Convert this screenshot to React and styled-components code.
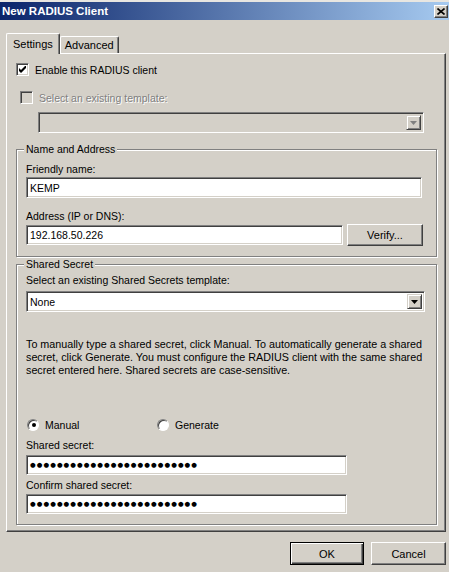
import React from "react";
import styled, { createGlobalStyle } from "styled-components";

const GlobalStyle = createGlobalStyle`
  html, body {
    margin: 0;
    padding: 0;
    background: #d4d0c8;
  }
  body {
    font-family: "Liberation Sans", Arial, sans-serif;
    font-size: 10.5px;
    color: #000;
  }
`;

const Window = styled.div`
  width: 449px;
  height: 572px;
  background: #d4d0c8;
  display: flex;
  flex-direction: column;
  overflow: hidden;
`;

const TitleBar = styled.div`
  height: 18px;
  border-top: 2px solid #e8e6e1;
  background: linear-gradient(to right, #0a246a, #a6caf0);
  display: flex;
  align-items: center;
  justify-content: space-between;
  padding: 0 1px 0 2px;
`;

const TitleText = styled.span`
  color: #fff;
  font-weight: bold;
  font-size: 11.5px;
`;

const CloseButton = styled.div`
  width: 12px;
  height: 11px;
  background: #d4d0c8;
  border: 1px solid;
  border-color: #fff #404040 #404040 #fff;
  box-shadow: inset -1px -1px 0 #808080;
  display: flex;
  align-items: center;
  justify-content: center;
  margin-top: 1px;
`;

const Body = styled.div`
  padding: 13px 3px 0 6px;
  display: flex;
  flex-direction: column;
`;

const TabStrip = styled.div`
  display: flex;
  align-items: flex-end;
  height: 20px;
  position: relative;
  z-index: 1;
`;

const Tab = styled.div`
  height: ${(p) => (p.active ? "20px" : "16px")};
  padding: 0 ${(p) => (p.active ? "6px" : "4px")};
  margin-bottom: ${(p) => (p.active ? "-1px" : "0")};
  background: #d4d0c8;
  border-top: 1px solid #fff;
  border-left: 1px solid #fff;
  border-right: 1px solid #404040;
  box-shadow: inset -1px 0 0 #808080;
  border-radius: 2px 2px 0 0;
  display: flex;
  align-items: center;
  font-size: 11px;
`;

const Panel = styled.div`
  width: 440px;
  height: 479px;
  box-sizing: border-box;
  border: 1px solid;
  border-color: #fff #404040 #404040 #fff;
  box-shadow: inset -1px -1px 0 #808080;
  padding: 9px 0 0 9px;
  display: flex;
  flex-direction: column;
`;

const CheckRow = styled.label`
  display: flex;
  align-items: center;
  height: 13px;
  gap: 6px;
  margin-left: ${(p) => p.indent || 0}px;
  margin-top: ${(p) => p.top || 0}px;
  color: ${(p) => (p.disabled ? "#808080" : "#000")};
  text-shadow: ${(p) => (p.disabled ? "1px 1px 0 #fff" : "none")};
`;

const CheckBox = styled.span`
  width: 11px;
  height: 11px;
  flex: none;
  border: 1px solid;
  border-color: #808080 #fff #fff #808080;
  box-shadow: inset 1px 1px 0 #404040, inset -1px -1px 0 #d4d0c8;
  background: ${(p) => (p.disabled ? "#d4d0c8" : "#fff")};
  display: flex;
  align-items: center;
  justify-content: center;
`;

const Combo = styled.div`
  width: ${(p) => p.width}px;
  height: 21px;
  box-sizing: border-box;
  margin-left: ${(p) => p.indent || 0}px;
  margin-top: ${(p) => p.top || 0}px;
  border: 1px solid;
  border-color: #808080 #fff #fff #808080;
  box-shadow: inset 1px 1px 0 #404040, inset -1px -1px 0 #d4d0c8;
  background: ${(p) => (p.disabled ? "#d4d0c8" : "#fff")};
  display: flex;
  align-items: center;
  justify-content: space-between;
  padding: 2px 2px 2px 3px;
`;

const ComboArrow = styled.span`
  width: 15px;
  height: 15px;
  box-sizing: border-box;
  background: #d4d0c8;
  border: 1px solid;
  border-color: #d4d0c8 #404040 #404040 #d4d0c8;
  box-shadow: inset 1px 1px 0 #fff, inset -1px -1px 0 #808080;
  display: flex;
  align-items: center;
  justify-content: center;
`;

const Group = styled.div`
  position: relative;
  width: 421px;
  height: ${(p) => p.height}px;
  box-sizing: border-box;
  margin-top: ${(p) => p.top}px;
  border: 1px solid #808080;
  box-shadow: inset 1px 1px 0 #fff, 1px 1px 0 #fff;
  padding: ${(p) => p.pad}px 0 0 9px;
  display: flex;
  flex-direction: column;
`;

const Legend = styled.span`
  position: absolute;
  top: -7px;
  left: 7px;
  padding: 0 2px;
  line-height: 13px;
  background: #d4d0c8;
`;

const Label = styled.div`
  line-height: 13px;
  height: 13px;
  margin-top: ${(p) => p.top || 0}px;
  white-space: nowrap;
`;

const TextBox = styled.div`
  width: ${(p) => p.width}px;
  height: ${(p) => p.h || 21}px;
  box-sizing: border-box;
  margin-top: ${(p) => p.top || 0}px;
  border: 1px solid;
  border-color: #808080 #fff #fff #808080;
  box-shadow: inset 1px 1px 0 #404040, inset -1px -1px 0 #d4d0c8;
  background: #fff;
  display: flex;
  align-items: center;
  padding-left: 3px;
  white-space: nowrap;
`;

const Dots = styled.span`
  font-family: "DejaVu Sans", sans-serif;
  font-size: 6.5px;
  letter-spacing: 1.05px;
  line-height: 1;
`;

const Row = styled.div`
  display: flex;
  align-items: center;
  gap: 4px;
  margin-top: ${(p) => p.top || 0}px;
`;

const Button = styled.div`
  width: ${(p) => p.width}px;
  height: ${(p) => p.h || 23}px;
  box-sizing: border-box;
  background: #d4d0c8;
  border: 1px solid;
  border-color: ${(p) =>
    p.default ? "#000" : "#fff #404040 #404040 #fff"};
  box-shadow: ${(p) =>
    p.default
      ? "inset 1px 1px 0 #fff, inset -1px -1px 0 #404040, inset -2px -2px 0 #808080"
      : "inset -1px -1px 0 #808080"};
  display: flex;
  align-items: center;
  justify-content: center;
  font-size: 11px;
`;

const Paragraph = styled.p`
  margin: ${(p) => p.top}px 0 0;
  font-size: 10.75px;
  line-height: 13px;
  white-space: nowrap;
`;

const RadioRow = styled.div`
  display: grid;
  grid-template-columns: 130px auto;
  margin-top: ${(p) => p.top}px;
  margin-left: 1px;
  height: 13px;
`;

const Radio = styled.label`
  display: flex;
  align-items: center;
  gap: 6px;
`;

const RadioCircle = styled.span`
  width: 10px;
  height: 10px;
  flex: none;
  border-radius: 50%;
  border: 1px solid;
  border-color: #808080 #fff #fff #808080;
  box-shadow: inset 1px 1px 0 #404040;
  background: #fff;
  display: flex;
  align-items: center;
  justify-content: center;
  &::after {
    content: "";
    display: ${(p) => (p.checked ? "block" : "none")};
    width: 4px;
    height: 4px;
    border-radius: 50%;
    background: #000;
    margin: 1px 0 0 1px;
  }
`;

const Footer = styled.div`
  display: flex;
  justify-content: flex-end;
  gap: 7px;
  margin-top: 10px;
`;

const Arrow = ({ color }) => (
  <svg width="7" height="4" viewBox="0 0 7 4">
    <path d="M0 0h7L3.5 4z" fill={color} />
  </svg>
);

const Check = () => (
  <svg width="7" height="7" viewBox="0 0 7 7">
    <path d="M0 2v3l2 2 5-5V-1L2 4z" fill="#000" />
  </svg>
);

const secret = "●".repeat(25);

export default function App() {
  return (
    <>
      <GlobalStyle />
      <Window>
        <TitleBar>
          <TitleText>New RADIUS Client</TitleText>
          <CloseButton>
            <svg width="8" height="7" viewBox="0 0 8 7">
              <path d="M0.5 0.5l7 6M7.5 0.5l-7 6" stroke="#000" strokeWidth="1.6" />
            </svg>
          </CloseButton>
        </TitleBar>
        <Body>
          <TabStrip>
            <Tab active>Settings</Tab>
            <Tab>Advanced</Tab>
          </TabStrip>
          <Panel>
            <CheckRow>
              <CheckBox>
                <Check />
              </CheckBox>
              Enable this RADIUS client
            </CheckRow>
            <CheckRow disabled indent={4} top={15}>
              <CheckBox disabled />
              Select an existing template:
            </CheckRow>
            <Combo disabled width={386} indent={22} top={8}>
              <span />
              <ComboArrow>
                <Arrow color="#808080" />
              </ComboArrow>
            </Combo>

            <Group top={16} height={108} pad={13}>
              <Legend>Name and Address</Legend>
              <Label>Friendly name:</Label>
              <TextBox width={396} top={1}>
                KEMP
              </TextBox>
              <Label top={12}>Address (IP or DNS):</Label>
              <Row top={1}>
                <TextBox width={317} h={20}>
                  192.168.50.226
                </TextBox>
                <Button width={76} h={22}>
                  Verify...
                </Button>
              </Row>
            </Group>

            <Group top={7} height={261} pad={9}>
              <Legend>Shared Secret</Legend>
              <Label>Select an existing Shared Secrets template:</Label>
              <Combo width={399} top={4}>
                <span>None</span>
                <ComboArrow>
                  <Arrow color="#000" />
                </ComboArrow>
              </Combo>
              <Paragraph top={26}>
                To manually type a shared secret, click Manual. To automatically generate a shared
                <br />
                secret, click Generate. You must configure the RADIUS client with the same shared
                <br />
                secret entered here. Shared secrets are case-sensitive.
              </Paragraph>
              <RadioRow top={41}>
                <Radio>
                  <RadioCircle checked />
                  Manual
                </Radio>
                <Radio>
                  <RadioCircle />
                  Generate
                </Radio>
              </RadioRow>
              <Label top={8}>Shared secret:</Label>
              <TextBox width={321} h={20} top={3}>
                <Dots>{secret}</Dots>
              </TextBox>
              <Label top={4}>Confirm shared secret:</Label>
              <TextBox width={321} h={20} top={2}>
                <Dots>{secret}</Dots>
              </TextBox>
            </Group>
          </Panel>
          <Footer>
            <Button default width={74}>
              OK
            </Button>
            <Button width={75}>Cancel</Button>
          </Footer>
        </Body>
      </Window>
    </>
  );
}
